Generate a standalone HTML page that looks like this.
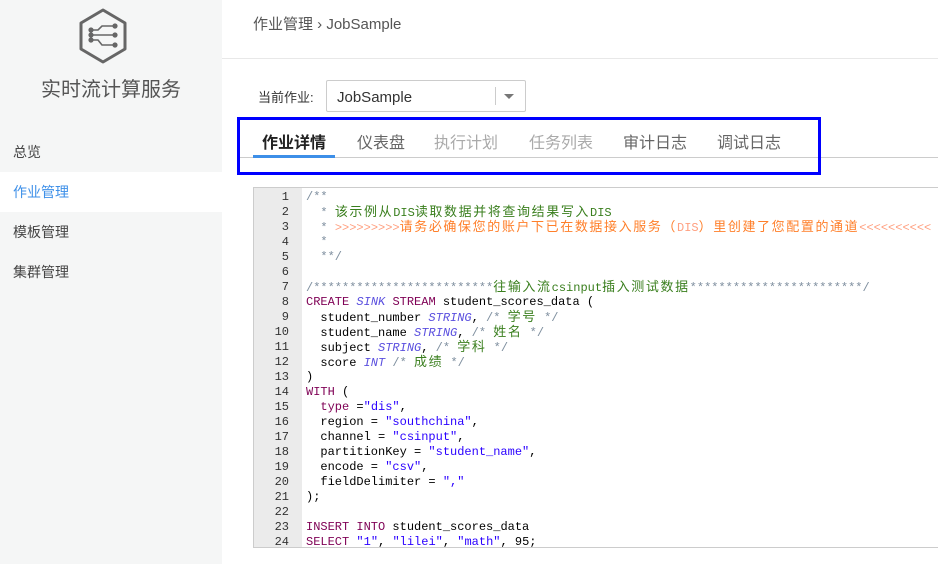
<!DOCTYPE html>
<html><head><meta charset="utf-8"><style>
*{margin:0;padding:0;box-sizing:border-box}
body{width:938px;height:564px;overflow:hidden;background:#fff;font-family:"Liberation Sans","Noto Sans CJK SC",sans-serif;position:relative;color:#333}
.side{position:absolute;left:0;top:0;width:222px;height:564px;background:#f5f6f6}
.title{position:absolute;left:0;width:222px;top:73px;text-align:center;font-size:20px;color:#555}
.nav{position:absolute;left:0;width:222px;height:40px;line-height:40px;padding-left:13px;font-size:14px;color:#444}
.nav.act{background:#fff;color:#3d8fe8}
.abs{position:absolute}
.code{position:absolute;left:253px;top:187px;width:690px;height:361px;border:1px solid #ccc;border-right:none;overflow:hidden;background:#fff}
.gut{position:absolute;left:0;top:0;width:48px;height:100%;background:#ebebeb}
.ln{position:absolute;left:0;width:35px;text-align:right;font-family:"Liberation Mono",monospace;font-size:12px;color:#333;line-height:15px}
.cl{position:absolute;left:52px;white-space:pre;font-family:"Liberation Mono",monospace;font-size:12px;color:#000;line-height:15px;height:15px}
.z{font-family:"Noto Sans CJK SC",sans-serif;font-size:13px;letter-spacing:1.6px;line-height:12px}
.c{color:#3a7f1e}.s{color:#7f8f9f}.o{color:#ff7f2a}.p{color:#ff9f7f}.k{color:#7f0055}.i{color:#5a4fdf;font-style:italic}.q{color:#2a00ff}
</style></head><body>
<div class="side">
<svg class="abs" style="left:78px;top:8px" width="50" height="56" viewBox="0 0 50 56"><polygon points="25,2 47,15 47,41 25,54 3,41 3,15" fill="none" stroke="#666" stroke-width="3" stroke-linejoin="round"/>
<g stroke="#666" stroke-width="1.6" fill="#666"><path d="M13,27 H37" fill="none"/><path d="M13,22 H20 L24,18 H37" fill="none"/><path d="M13,32 H20 L24,37 H37" fill="none"/><circle cx="13" cy="22" r="1.8"/><circle cx="13" cy="27" r="1.8"/><circle cx="13" cy="32" r="1.8"/><circle cx="37" cy="18" r="1.8"/><circle cx="37" cy="27" r="1.8"/><circle cx="37" cy="37" r="1.8"/></g></svg>
<div class="title">实时流计算服务</div>
<div class="nav" style="top:132px">总览</div>
<div class="nav act" style="top:172px">作业管理</div>
<div class="nav" style="top:212px">模板管理</div>
<div class="nav" style="top:252px">集群管理</div>
</div>
<div class="abs" style="left:253px;top:13px;font-size:15px;color:#555">作业管理 › JobSample</div>
<div class="abs" style="left:222px;top:58px;width:716px;height:1px;background:#e8e8e8"></div>
<div class="abs" style="left:258px;top:87px;font-size:13px;color:#333">当前作业:</div>
<div class="abs" style="left:326px;top:80px;width:200px;height:32px;border:1px solid #ccc;border-radius:2px;font-size:15px;line-height:34px;padding-left:10px;color:#333">JobSample
<div class="abs" style="left:168px;top:6px;width:1px;height:18px;background:#ccc"></div>
<div class="abs" style="left:177px;top:13px;width:0;height:0;border-left:5px solid transparent;border-right:5px solid transparent;border-top:5px solid #777"></div></div>
<div class="abs" style="left:238px;top:157px;width:700px;height:1px;background:#ccc"></div>
<div class="abs" style="left:253px;top:155px;width:82px;height:3px;background:#3d8fe8"></div>
<div class="abs" style="top:129px;left:262px;font-size:16px;font-weight:bold;color:#222">作业详情</div>
<div class="abs" style="top:129px;left:357px;font-size:16px;color:#666">仪表盘</div>
<div class="abs" style="top:129px;left:434px;font-size:16px;color:#aaa">执行计划</div>
<div class="abs" style="top:129px;left:529px;font-size:16px;color:#aaa">任务列表</div>
<div class="abs" style="top:129px;left:623px;font-size:16px;color:#666">审计日志</div>
<div class="abs" style="top:129px;left:717px;font-size:16px;color:#666">调试日志</div>
<div class="abs" style="left:237px;top:117px;width:584px;height:58px;border:3px solid #0000ff"></div>
<div class="code"><div class="gut"></div>
<div class="ln" style="top:2px">1</div><div class="ln" style="top:17px">2</div><div class="ln" style="top:32px">3</div><div class="ln" style="top:47px">4</div><div class="ln" style="top:62px">5</div><div class="ln" style="top:77px">6</div><div class="ln" style="top:92px">7</div><div class="ln" style="top:107px">8</div><div class="ln" style="top:122px">9</div><div class="ln" style="top:137px">10</div><div class="ln" style="top:152px">11</div><div class="ln" style="top:167px">12</div><div class="ln" style="top:182px">13</div><div class="ln" style="top:197px">14</div><div class="ln" style="top:212px">15</div><div class="ln" style="top:227px">16</div><div class="ln" style="top:242px">17</div><div class="ln" style="top:257px">18</div><div class="ln" style="top:272px">19</div><div class="ln" style="top:287px">20</div><div class="ln" style="top:302px">21</div><div class="ln" style="top:317px">22</div><div class="ln" style="top:332px">23</div><div class="ln" style="top:347px">24</div>
<div class="cl s" style="top:2px">/**</div>
<div class="cl" style="top:17px"><span class="s">  * </span><span class="c"><span class="z">该示例从</span>DIS<span class="z">读取数据并将查询结果写入</span>DIS</span></div>
<div class="cl" style="top:32px"><span class="s">  * </span><span class="p">&gt;&gt;&gt;&gt;&gt;&gt;&gt;&gt;&gt;</span><span class="o z">请务必确保您的账户下已在数据接入服务（</span><span class="p">DIS</span><span class="o z">）里创建了您配置的通道</span><span class="p">&lt;&lt;&lt;&lt;&lt;&lt;&lt;&lt;&lt;&lt;</span></div>
<div class="cl s" style="top:47px">  *</div>
<div class="cl s" style="top:62px">  **/</div>
<div class="cl" style="top:92px"><span class="s">/*************************</span><span class="c"><span class="z">往输入流</span>csinput<span class="z">插入测试数据</span></span><span class="s">************************/</span></div>
<div class="cl" style="top:107px"><span class="k">CREATE</span> <span class="i">SINK</span> <span class="k">STREAM</span> student_scores_data (</div>
<div class="cl" style="top:122px">  student_number <span class="i">STRING</span>, <span class="s">/*</span> <span class="c z">学号</span> <span class="s">*/</span></div>
<div class="cl" style="top:137px">  student_name <span class="i">STRING</span>, <span class="s">/*</span> <span class="c z">姓名</span> <span class="s">*/</span></div>
<div class="cl" style="top:152px">  subject <span class="i">STRING</span>, <span class="s">/*</span> <span class="c z">学科</span> <span class="s">*/</span></div>
<div class="cl" style="top:167px">  score <span class="i">INT</span> <span class="s">/*</span> <span class="c z">成绩</span> <span class="s">*/</span></div>
<div class="cl" style="top:182px">)</div>
<div class="cl" style="top:197px"><span class="k">WITH</span> (</div>
<div class="cl" style="top:212px">  <span class="k">type</span> =<span class="q">"dis"</span>,</div>
<div class="cl" style="top:227px">  region = <span class="q">"southchina"</span>,</div>
<div class="cl" style="top:242px">  channel = <span class="q">"csinput"</span>,</div>
<div class="cl" style="top:257px">  partitionKey = <span class="q">"student_name"</span>,</div>
<div class="cl" style="top:272px">  encode = <span class="q">"csv"</span>,</div>
<div class="cl" style="top:287px">  fieldDelimiter = <span class="q">","</span></div>
<div class="cl" style="top:302px">);</div>
<div class="cl" style="top:332px"><span class="k">INSERT INTO</span> student_scores_data</div>
<div class="cl" style="top:347px"><span class="k">SELECT</span> <span class="q">"1"</span>, <span class="q">"lilei"</span>, <span class="q">"math"</span>, 95;</div>
</div>
</body></html>
